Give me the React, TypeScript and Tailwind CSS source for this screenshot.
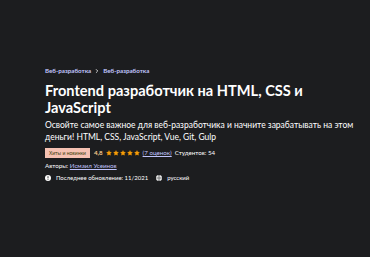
import { ChevronRight, Star } from "lucide-react";

function Stars() {
  return (
    <span className="flex items-center gap-[1px]">
      {[0, 1, 2, 3, 4].map((i) => (
        <Star key={i} className="w-[6px] h-[6px] text-[#f69c08]" fill="currentColor" strokeWidth={1} />
      ))}
    </span>
  );
}

export default function App() {
  return (
    <div
      className="w-[370px] h-[257px] bg-[#1c1d1f] text-white overflow-hidden"
      style={{ fontFamily: 'Lato, "Noto Sans", sans-serif' }}
    >
      <div className="pl-[45px] pt-[66px] pr-[4px]">
        <div className="flex items-center gap-[3px] text-[6.2px] font-bold text-[#c0c4fc] leading-[10px]">
          <span>Веб-разработка</span>
          <ChevronRight className="w-[6px] h-[6px] text-white" strokeWidth={3} />
          <span>Веб-разработка</span>
        </div>
        <h1 className="mt-[6px] text-[14.6px] font-bold leading-[17px] pr-[40px]">
          Frontend разработчик на HTML, CSS и JavaScript
        </h1>
        <p className="mt-[3px] text-[8.5px] leading-[12px]">
          Освойте самое важное для веб-разработчика и начните зарабатывать на этом деньги! HTML, CSS, JavaScript, Vue, Git, Gulp
        </p>
        <div className="mt-[5px] flex items-center gap-[3px] text-[6.2px] leading-[10px]">
          <span className="bg-[#f5c1b2] text-[#3d3c0a] px-[4px] h-[10px] flex items-center text-[5px]">Хиты и новинки</span>
          <span className="ml-[1px] font-bold text-[#f3ca8c]">4,8</span>
          <Stars />
          <span className="text-[#c0c4fc] underline">(7 оценок)</span>
          <span>Студентов: 54</span>
        </div>
        <div className="mt-[3px] text-[6.2px] leading-[9px]">
          Авторы: <span className="text-[#c0c4fc] underline">Исмаил Усеинов</span>
        </div>
        <div className="mt-[3px] flex items-center text-[6px] leading-[10px]">
          <svg viewBox="0 0 10 10" className="w-[6px] h-[6px] mr-[5px]">
            <circle cx="5" cy="5" r="5" fill="white" />
            <rect x="4.3" y="2" width="1.4" height="3.5" fill="#1c1d1f" />
            <rect x="4.3" y="6.5" width="1.4" height="1.4" fill="#1c1d1f" />
          </svg>
          <span>Последнее обновление: 11/2021</span>
          <svg viewBox="0 0 10 10" className="w-[6px] h-[6px] ml-[8px] mr-[5px]">
            <circle cx="5" cy="5" r="5" fill="white" />
            <path d="M0 5h10M5 0c-2 2.5-2 7.5 0 10M5 0c2 2.5 2 7.5 0 10" stroke="#1c1d1f" strokeWidth="0.8" fill="none" />
          </svg>
          <span>русский</span>
        </div>
      </div>
    </div>
  );
}
